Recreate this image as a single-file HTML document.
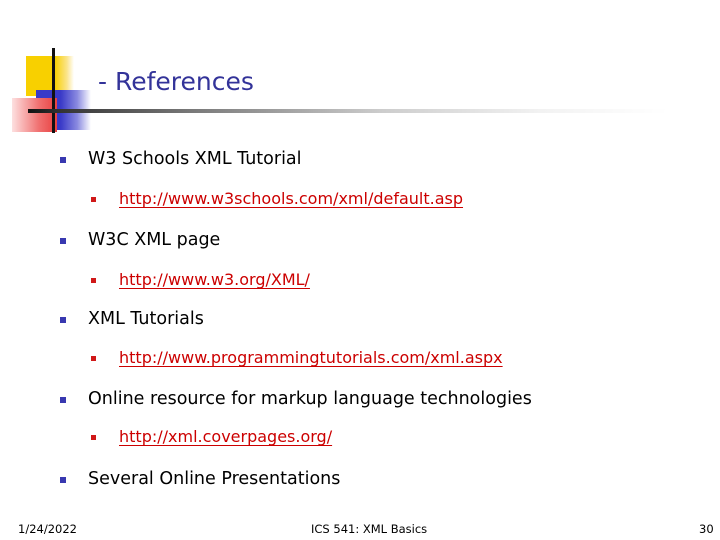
<!DOCTYPE html>
<html><head><style>
body{margin:0;width:720px;height:540px;background:#fff;position:relative;overflow:hidden;font-family:"DejaVu Sans","Liberation Sans",sans-serif}
.a{position:absolute;white-space:nowrap}
.l1{font-size:17.5px;color:#000;left:88px}
.l2{font-size:16px;color:#cc0000;left:119px;text-decoration:underline;text-decoration-thickness:1px;text-underline-offset:3px}
.b1{position:absolute;left:60px;width:6px;height:6px;background:#3838b0}
.b2{position:absolute;left:91px;width:5px;height:5px;background:#d01818}
.f{font-size:11.5px;color:#000;top:522px}
</style></head><body>
<div class="a" style="left:26px;top:56px;width:48px;height:40px;background:linear-gradient(90deg,#f8d000 60%,#fbe48a 85%,#fff)"></div>
<div class="a" style="left:36px;top:90px;width:55px;height:40px;background:linear-gradient(90deg,#3a3ac8 45%,#8a8ae0 75%,#fff)"></div>
<div class="a" style="left:12px;top:98px;width:45px;height:34px;background:linear-gradient(90deg,#fde0e0,#f07070 60%,#e84040)"></div>
<div class="a" style="left:52px;top:48px;width:3px;height:85px;background:#111"></div>
<div class="a" style="left:28px;top:109px;width:640px;height:4px;background:linear-gradient(90deg,#111 0%,#333 5%,#777 25%,#ccc 55%,#f2f2f2 80%,#fff)"></div>
<div class="a" style="left:98px;top:67px;font-size:25px;color:#333399">- References</div>

<div class="b1" style="top:157px"></div><div class="a l1" style="top:149px">W3 Schools XML Tutorial</div>
<div class="b2" style="top:197px"></div><div class="a l2" style="top:189px">http://www.w3schools.com/xml/default.asp</div>
<div class="b1" style="top:238px"></div><div class="a l1" style="top:230px">W3C XML page</div>
<div class="b2" style="top:278px"></div><div class="a l2" style="top:270px">http://www.w3.org/XML/</div>
<div class="b1" style="top:317px"></div><div class="a l1" style="top:309px">XML Tutorials</div>
<div class="b2" style="top:356px"></div><div class="a l2" style="top:348px">http://www.programmingtutorials.com/xml.aspx</div>
<div class="b1" style="top:397px"></div><div class="a l1" style="top:389px">Online resource for markup language technologies</div>
<div class="b2" style="top:435px"></div><div class="a l2" style="top:427px">http://xml.coverpages.org/</div>
<div class="b1" style="top:477px"></div><div class="a l1" style="top:469px">Several Online Presentations</div>

<div class="a f" style="left:18px">1/24/2022</div>
<div class="a f" style="left:311px">ICS 541: XML Basics</div>
<div class="a f" style="left:699px">30</div>
</body></html>
